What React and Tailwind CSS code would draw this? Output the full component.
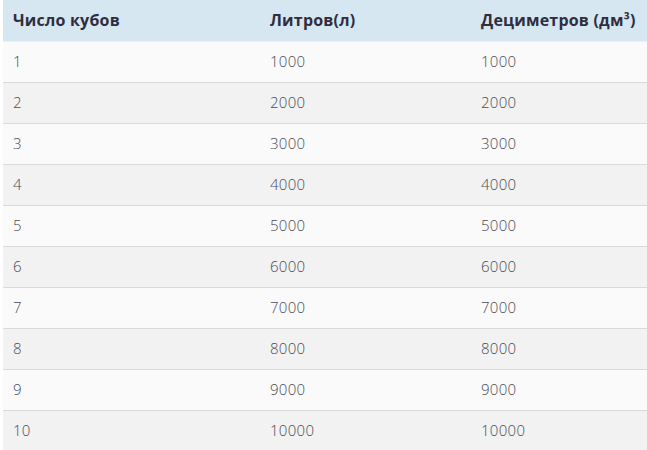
import React from "react";

const rows = [1, 2, 3, 4, 5, 6, 7, 8, 9, 10];

const App = () => {
  return (
    <div className="w-[647px] h-[450px] overflow-hidden bg-white pl-[3px]" style={{ fontFamily: '"Open Sans", "Noto Sans", sans-serif' }}>
      <table className="w-[644px] border-collapse table-fixed">
        <colgroup>
          <col className="w-[257px]" />
          <col className="w-[211px]" />
          <col />
        </colgroup>
        <thead>
          <tr className="bg-[#d7e7f1] h-[41px] border-b border-[#f6ecec]">
            <th className="text-left pl-[10px] font-bold text-[16px] tracking-[0.2px] text-[#2e2e40]">Число кубов</th>
            <th className="text-left pl-[10px] font-bold text-[16px] tracking-[0.2px] text-[#2e2e40]">Литров(л)</th>
            <th className="text-left pl-[10px] font-bold text-[16px] tracking-[0.2px] text-[#2e2e40] whitespace-nowrap">
              Дециметров (дм³)
            </th>
          </tr>
        </thead>
        <tbody>
          {rows.map((n, i) => (
            <tr
              key={n}
              className={`h-[41px] border-b border-[#d9d9d9] ${i % 2 === 0 ? "bg-[#fafafa]" : "bg-[#f2f2f2]"}`}
            >
              <td className="pl-[10px] text-[15px] font-light tracking-[0.3px] text-[#4a4a55]">{n}</td>
              <td className="pl-[10px] text-[15px] font-light tracking-[0.3px] text-[#4a4a55]">{n * 1000}</td>
              <td className="pl-[10px] text-[15px] font-light tracking-[0.3px] text-[#4a4a55]">{n * 1000}</td>
            </tr>
          ))}
        </tbody>
      </table>
    </div>
  );
};

export default App;
